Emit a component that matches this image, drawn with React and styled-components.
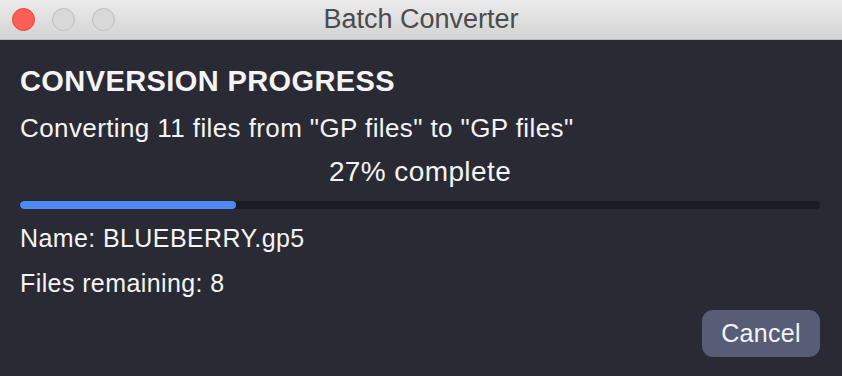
import React from 'react';
import styled, { createGlobalStyle } from 'styled-components';

const GlobalStyle = createGlobalStyle`
  html, body {
    margin: 0;
    padding: 0;
    background: #292a33;
  }
  body {
    font-family: "Liberation Sans", Arial, Helvetica, sans-serif;
  }
`;

const Window = styled.div`
  width: 842px;
  height: 376px;
  display: flex;
  flex-direction: column;
  background: #292a33;
  overflow: hidden;
`;

const TitleBar = styled.div`
  height: 39px;
  flex: 0 0 39px;
  display: flex;
  align-items: center;
  position: relative;
  background: linear-gradient(to bottom, #ebebeb, #d3d3d3);
  border-bottom: 1px solid #b9b9b9;
`;

const Lights = styled.div`
  display: flex;
  gap: 17px;
  padding-left: 12px;
`;

const Light = styled.span`
  width: 23px;
  height: 23px;
  border-radius: 50%;
  box-sizing: border-box;
  background: ${p => (p.$red ? '#fc5f57' : '#d8d8d8')};
  border: 1px solid ${p => (p.$red ? '#e0443e' : '#bdbdbd')};
`;

const WindowTitle = styled.div`
  position: absolute;
  left: 0;
  right: 0;
  text-align: center;
  font-size: 27px;
  color: #4b4b4b;
  line-height: 39px;
  pointer-events: none;
`;

const Content = styled.div`
  flex: 1;
  display: flex;
  flex-direction: column;
  padding: 0 22px 0 20px;
  color: #f4f4f6;
`;

const Heading = styled.h1`
  margin: 25px 0 0;
  font-size: 29px;
  line-height: 33px;
  font-weight: 700;
  letter-spacing: 0.4px;
`;

const Line = styled.div`
  margin-top: ${p => p.$mt}px;
  font-size: ${p => p.$size}px;
  line-height: ${p => p.$lh}px;
  letter-spacing: 0.4px;
  text-align: ${p => (p.$center ? 'center' : 'left')};
  white-space: nowrap;
`;

const Track = styled.div`
  margin-top: 13px;
  height: 8px;
  border-radius: 4px;
  background: #1b1c22;
  overflow: hidden;
`;

const Fill = styled.div`
  height: 100%;
  border-radius: 4px;
  background: #5189f3;
`;

const Footer = styled.div`
  display: flex;
  justify-content: flex-end;
  margin-top: 12px;
`;

const Button = styled.button`
  height: 47px;
  width: 118px;
  border: none;
  border-radius: 11px;
  background: #575d77;
  color: #f4f4f6;
  font-family: inherit;
  font-size: 25px;
  letter-spacing: 0.3px;
  padding: 0;
`;

export default function App() {
  const percent = 27;
  return (
    <Window>
      <GlobalStyle />
      <TitleBar>
        <Lights>
          <Light $red />
          <Light />
          <Light />
        </Lights>
        <WindowTitle>Batch Converter</WindowTitle>
      </TitleBar>
      <Content>
        <Heading>CONVERSION PROGRESS</Heading>
        <Line $size={26} $lh={30} $mt={15}>
          Converting 11 files from "GP files" to "GP files"
        </Line>
        <Line $size={28} $lh={32} $mt={13} $center>
          {percent}% complete
        </Line>
        <Track>
          <Fill style={{ width: `${percent}%` }} />
        </Track>
        <Line $size={25} $lh={30} $mt={14}>Name: BLUEBERRY.gp5</Line>
        <Line $size={25} $lh={30} $mt={15}>Files remaining: 8</Line>
        <Footer>
          <Button>Cancel</Button>
        </Footer>
      </Content>
    </Window>
  );
}
